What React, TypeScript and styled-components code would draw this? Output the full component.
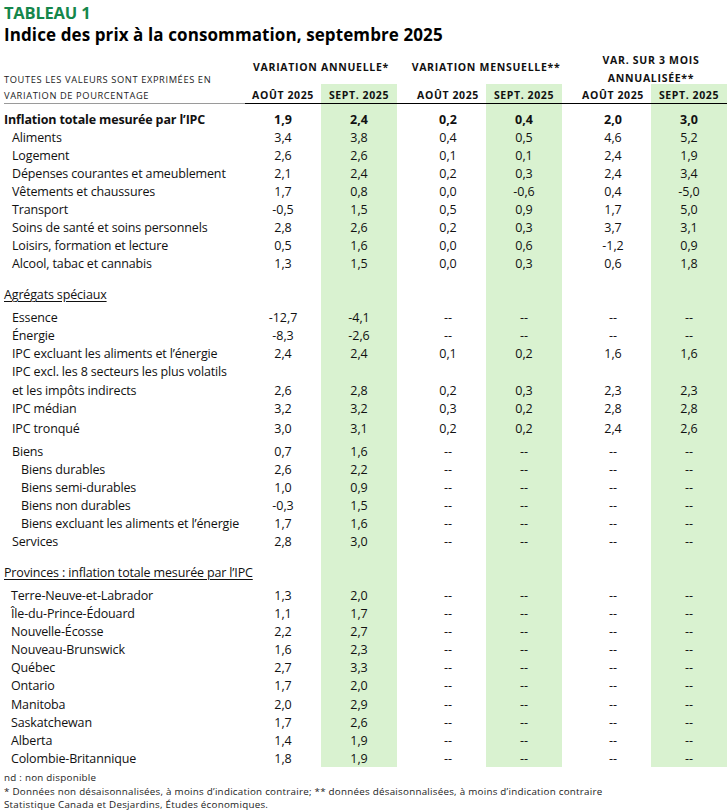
import React from "react";
import styled, { createGlobalStyle } from "styled-components";

const Global = createGlobalStyle`
  html, body { margin: 0; padding: 0; background: #fff; }
  body { font-family: "Open Sans", "Noto Sans", sans-serif; color: #111; }
`;

const COLS = "241px 76px 76px 13px 76px 76px 13px 76px 76px";
const GREEN = "#d9f2d0";

const Page = styled.div`
  width: 728px;
  padding: 3px 0 0 4px;
  box-sizing: border-box;
`;

const Kicker = styled.div`
  font-size: 16.5px;
  font-weight: 700;
  line-height: 20px;
  color: #15874b;
  letter-spacing: -0.2px;
`;

const Title = styled.h1`
  margin: 1px 0 0;
  font-size: 17px;
  font-weight: 700;
  line-height: 22px;
  color: #000;
  letter-spacing: 0.1px;
`;

const Head = styled.div`
  display: grid;
  grid-template-columns: ${COLS};
  grid-template-rows: 37.5px 20px;
`;

const UnitNote = styled.div`
  grid-column: 1;
  grid-row: 1 / span 2;
  padding-top: 25.5px;
  font-size: 9.3px;
  line-height: 16.5px;
  text-transform: uppercase;
  letter-spacing: 0.6px;
  color: #222;
  border-bottom: 1px solid #9a9a9a;
`;

const GroupHead = styled.div<{ $col: number; $pt: number }>`
  grid-row: 1;
  grid-column: ${(p) => p.$col} / span 2;
  align-self: start;
  padding-top: ${(p) => p.$pt}px;
  text-align: center;
  font-size: 10.5px;
  font-weight: 700;
  line-height: 18px;
  letter-spacing: 0.7px;
  color: #111;
`;

const SubHead = styled.div<{ $hl?: boolean }>`
  grid-row: 2;
  box-sizing: border-box;
  padding-top: 3px;
  text-align: center;
  font-size: 10.5px;
  font-weight: 700;
  line-height: 16px;
  letter-spacing: 0.6px;
  background: ${(p) => (p.$hl ? GREEN : "transparent")};
  border-bottom: 1px solid #000;
  color: #111;
`;

const Row = styled.div<{ $h: number }>`
  display: grid;
  grid-template-columns: ${COLS};
  height: ${(p) => p.$h}px;
  align-items: stretch;
`;

const Label = styled.div<{ $indent: number; $bold?: boolean; $u?: boolean }>`
  display: flex;
  align-items: center;
  padding-left: ${(p) => p.$indent}px;
  font-size: 12.5px;
  font-weight: ${(p) => (p.$bold ? 700 : 400)};
  text-decoration: ${(p) => (p.$u ? "underline" : "none")};
  text-underline-offset: 2px;
  white-space: nowrap;
  letter-spacing: -0.15px;
`;

const Cell = styled.div<{ $hl?: boolean; $bold?: boolean }>`
  display: flex;
  align-items: center;
  justify-content: center;
  font-size: 12.5px;
  font-weight: ${(p) => (p.$bold ? 700 : 400)};
  background: ${(p) => (p.$hl ? GREEN : "transparent")};
`;

const Notes = styled.div`
  margin-top: 4px;
  font-size: 9.8px;
  line-height: 13.5px;
  color: #222;
  letter-spacing: 0.25px;
`;

type Entry =
  | { kind: "row"; label: string; vals?: string[]; indent: number; h: number; bold?: boolean }
  | { kind: "section"; label: string; h: number }
  | { kind: "gap"; h: number };

const D = ["--", "--", "--", "--"];

const r = (label: string, indent: number, h: number, vals?: string[], bold?: boolean): Entry => ({
  kind: "row",
  label,
  indent,
  h,
  vals,
  bold,
});

const entries: Entry[] = [
  { kind: "gap", h: 7 },
  r("Inflation totale mesurée par l’IPC", 0, 18.05, ["1,9", "2,4", "0,2", "0,4", "2,0", "3,0"], true),
  r("Aliments", 8, 18.05, ["3,4", "3,8", "0,4", "0,5", "4,6", "5,2"]),
  r("Logement", 8, 18.05, ["2,6", "2,6", "0,1", "0,1", "2,4", "1,9"]),
  r("Dépenses courantes et ameublement", 8, 18.05, ["2,1", "2,4", "0,2", "0,3", "2,4", "3,4"]),
  r("Vêtements et chaussures", 8, 18.05, ["1,7", "0,8", "0,0", "-0,6", "0,4", "-5,0"]),
  r("Transport", 8, 18.05, ["-0,5", "1,5", "0,5", "0,9", "1,7", "5,0"]),
  r("Soins de santé et soins personnels", 8, 18.05, ["2,8", "2,6", "0,2", "0,3", "3,7", "3,1"]),
  r("Loisirs, formation et lecture", 8, 18.05, ["0,5", "1,6", "0,0", "0,6", "-1,2", "0,9"]),
  r("Alcool, tabac et cannabis", 8, 18.05, ["1,3", "1,5", "0,0", "0,3", "0,6", "1,8"]),
  { kind: "gap", h: 13.05 },
  { kind: "section", label: "Agrégats spéciaux", h: 18 },
  { kind: "gap", h: 4.2 },
  r("Essence", 8, 18.2, ["-12,7", "-4,1", ...D]),
  r("Énergie", 8, 18.2, ["-8,3", "-2,6", ...D]),
  r("IPC excluant les aliments et l’énergie", 8, 18.2, ["2,4", "2,4", "0,1", "0,2", "1,6", "1,6"]),
  r("IPC excl. les 8 secteurs les plus volatils", 8, 18.2),
  r("et les impôts indirects", 8, 18.2, ["2,6", "2,8", "0,2", "0,3", "2,3", "2,3"]),
  r("IPC médian", 8, 18.2, ["3,2", "3,2", "0,3", "0,2", "2,8", "2,8"]),
  { kind: "gap", h: 1.8 },
  r("IPC tronqué", 8, 18.2, ["3,0", "3,1", "0,2", "0,2", "2,4", "2,6"]),
  { kind: "gap", h: 5.6 },
  r("Biens", 8, 17.9, ["0,7", "1,6", ...D]),
  r("Biens durables", 17, 17.9, ["2,6", "2,2", ...D]),
  r("Biens semi-durables", 17, 17.9, ["1,0", "0,9", ...D]),
  r("Biens non durables", 17, 17.9, ["-0,3", "1,5", ...D]),
  r("Biens excluant les aliments et l’énergie", 17, 17.9, ["1,7", "1,6", ...D]),
  r("Services", 8, 17.9, ["2,8", "3,0", ...D]),
  { kind: "gap", h: 13.3 },
  { kind: "section", label: "Provinces : inflation totale mesurée par l’IPC", h: 18 },
  { kind: "gap", h: 4.95 },
  r("Terre-Neuve-et-Labrador", 7, 18.1, ["1,3", "2,0", ...D]),
  r("Île-du-Prince-Édouard", 7, 18.1, ["1,1", "1,7", ...D]),
  r("Nouvelle-Écosse", 7, 18.1, ["2,2", "2,7", ...D]),
  r("Nouveau-Brunswick", 7, 18.1, ["1,6", "2,3", ...D]),
  r("Québec", 7, 18.1, ["2,7", "3,3", ...D]),
  r("Ontario", 7, 18.1, ["1,7", "2,0", ...D]),
  r("Manitoba", 7, 18.1, ["2,0", "2,9", ...D]),
  r("Saskatchewan", 7, 18.1, ["1,7", "2,6", ...D]),
  r("Alberta", 7, 18.1, ["1,4", "1,9", ...D]),
  r("Colombie-Britannique", 7, 18.1, ["1,8", "1,9", ...D]),
];

function ValueCells({ vals, bold }: { vals?: string[]; bold?: boolean }) {
  const v = vals ?? ["", "", "", "", "", ""];
  return (
    <>
      <Cell $bold={bold}>{v[0]}</Cell>
      <Cell $hl $bold={bold}>{v[1]}</Cell>
      <Cell />
      <Cell $bold={bold}>{v[2]}</Cell>
      <Cell $hl $bold={bold}>{v[3]}</Cell>
      <Cell />
      <Cell $bold={bold}>{v[4]}</Cell>
      <Cell $hl $bold={bold}>{v[5]}</Cell>
    </>
  );
}

export default function App() {
  return (
    <Page>
      <Global />
      <Kicker>TABLEAU 1</Kicker>
      <Title>Indice des prix à la consommation, septembre 2025</Title>
      <Head>
        <UnitNote>
          Toutes les valeurs sont exprimées en
          <br />
          variation de pourcentage
        </UnitNote>
        <GroupHead $col={2} $pt={11.7}>VARIATION ANNUELLE*</GroupHead>
        <GroupHead $col={5} $pt={11.7}>VARIATION MENSUELLE**</GroupHead>
        <GroupHead $col={8} $pt={4.8}>
          VAR. SUR 3 MOIS
          <br />
          ANNUALISÉE**
        </GroupHead>
        <SubHead>AOÛT 2025</SubHead>
        <SubHead $hl>SEPT. 2025</SubHead>
        <SubHead />
        <SubHead>AOÛT 2025</SubHead>
        <SubHead $hl>SEPT. 2025</SubHead>
        <SubHead />
        <SubHead>AOÛT 2025</SubHead>
        <SubHead $hl>SEPT. 2025</SubHead>
      </Head>
      {entries.map((e, i) => {
        if (e.kind === "gap") {
          return (
            <Row key={i} $h={e.h}>
              <Label $indent={0} />
              <ValueCells />
            </Row>
          );
        }
        if (e.kind === "section") {
          return (
            <Row key={i} $h={e.h}>
              <Label $indent={0} $u>
                {e.label}
              </Label>
              <ValueCells />
            </Row>
          );
        }
        return (
          <Row key={i} $h={e.h}>
            <Label $indent={e.indent} $bold={e.bold}>
              {e.label}
            </Label>
            <ValueCells vals={e.vals} bold={e.bold} />
          </Row>
        );
      })}
      <Notes>
        nd : non disponible
        <br />* Données non désaisonnalisées, à moins d’indication contraire; ** données désaisonnalisées, à moins
        d’indication contraire
        <br />
        Statistique Canada et Desjardins, Études économiques.
      </Notes>
    </Page>
  );
}
